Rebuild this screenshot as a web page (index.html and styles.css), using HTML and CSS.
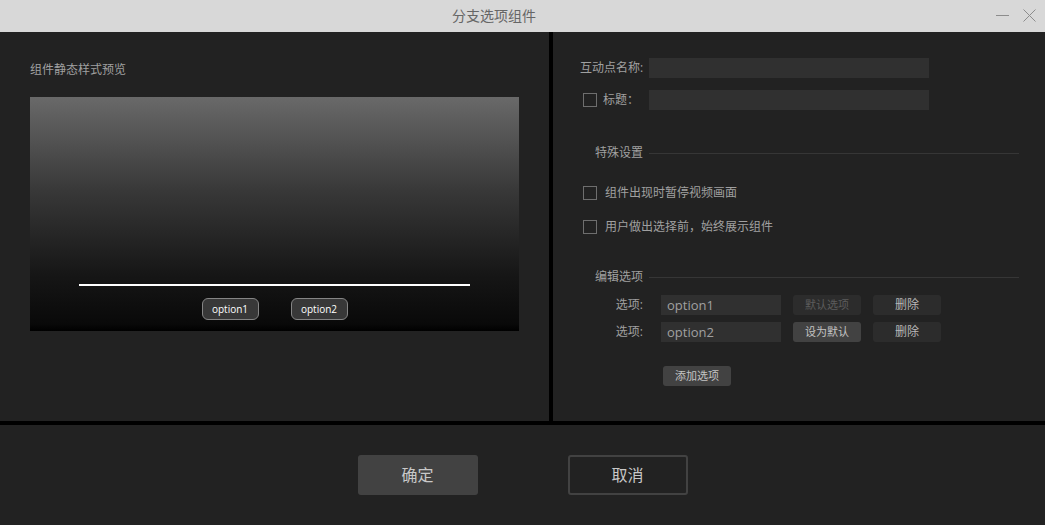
FILE: index.html
```html
<!DOCTYPE html>
<html lang="zh-CN">
<head>
<meta charset="utf-8">
<title>分支选项组件</title>
<link rel="stylesheet" href="styles.css">
</head>
<body>
<div class="dialog">
  <header class="titlebar">
    <h1 class="title">分支选项组件</h1>
    <div class="window-actions">
      <button class="window-button" type="button" aria-label="最小化">
        <svg width="14" height="14" viewBox="0 0 14 14"><path d="M0 6.5H13"/></svg>
      </button>
      <button class="window-button" type="button" aria-label="关闭">
        <svg width="14" height="14" viewBox="0 0 14 14"><path d="M.5 .5L12.5 12.5M12.5 .5L.5 12.5"/></svg>
      </button>
    </div>
  </header>

  <main class="panels">
    <section class="panel preview-panel">
      <h2 class="preview-title">组件静态样式预览</h2>
      <div class="preview">
        <div class="progress-line"></div>
        <div class="preview-options">
          <button class="preview-option" type="button">option1</button>
          <button class="preview-option" type="button">option2</button>
        </div>
      </div>
    </section>

    <form class="panel settings" id="settings">
      <div class="fields">
        <div class="field">
          <label class="field-label" for="name">互动点名称:</label>
          <input class="text-input" id="name" type="text">
        </div>
        <div class="field">
          <div class="field-check">
            <input class="checkbox" id="use-title" type="checkbox">
            <label for="use-title">标题：</label>
          </div>
          <input class="text-input" id="title" type="text" aria-label="标题">
        </div>
      </div>

      <h2 class="section-title special-title">特殊设置</h2>
      <div class="checks">
        <div class="check-row">
          <input class="checkbox" id="pause" type="checkbox">
          <label for="pause">组件出现时暂停视频画面</label>
        </div>
        <div class="check-row">
          <input class="checkbox" id="always" type="checkbox">
          <label for="always">用户做出选择前，始终展示组件</label>
        </div>
      </div>

      <h2 class="section-title edit-title">编辑选项</h2>
      <div class="options">
        <div class="option-row">
          <label class="field-label" for="option1">选项:</label>
          <input class="text-input option-input" id="option1" type="text" value="option1">
          <button class="small-button muted" type="button" disabled>默认选项</button>
          <button class="small-button delete" type="button">删除</button>
        </div>
        <div class="option-row">
          <label class="field-label" for="option2">选项:</label>
          <input class="text-input option-input" id="option2" type="text" value="option2">
          <button class="small-button" type="button">设为默认</button>
          <button class="small-button delete" type="button">删除</button>
        </div>
      </div>
      <button class="small-button add" type="button">添加选项</button>
    </form>
  </main>

  <footer class="footer">
    <button class="action primary" type="submit" form="settings">确定</button>
    <button class="action secondary" type="button">取消</button>
  </footer>
</div>
</body>
</html>
```

FILE: styles.css
```css
* {
  box-sizing: border-box;
}

body {
  margin: 0;
  background: #000;
  color: #a0a0a0;
  font: 12px/20px "Open Sans", "Noto Sans CJK SC", sans-serif;
}

button,
input {
  margin: 0;
  padding: 0;
  border: 0;
  color: inherit;
  font: inherit;
}

h1,
h2 {
  margin: 0;
  font-size: 12px;
  font-weight: 400;
}

.dialog {
  display: flex;
  flex-direction: column;
  min-height: 100vh;
}

.titlebar {
  display: grid;
  grid-template-columns: 1fr auto 1fr;
  align-items: center;
  height: 32px;
  padding-right: 8px;
  background: #d8d8d8;
  color: #666;
}

.title {
  grid-column: 2;
  padding-right: 49px;
  font-size: 14px;
}

.window-actions {
  display: flex;
  justify-content: flex-end;
  gap: 13px;
}

.window-button {
  display: flex;
  width: 14px;
  height: 14px;
  background: none;
}

.window-button path {
  fill: none;
  stroke: #8c8c8c;
}

.panels {
  display: grid;
  flex: 1;
  grid-template-columns: 549fr 492fr;
  gap: 4px;
}

.panel {
  background: #222;
}

.preview-panel {
  padding: 28px 30px;
}

.preview-title {
  margin-bottom: 17px;
}

.preview {
  display: flex;
  flex-direction: column;
  justify-content: flex-end;
  gap: 12px;
  height: 234px;
  padding-bottom: 11px;
  background: linear-gradient(#696969, #383838 40%, #161616 76%, #090909 97%, #000);
}

.progress-line {
  width: 80%;
  height: 2px;
  margin: 0 auto;
  background: #fff;
}

.preview-options {
  display: flex;
  justify-content: center;
  gap: 32px;
}

.preview-option {
  width: 57px;
  height: 22px;
  border: 1px solid #858585;
  border-radius: 6px;
  background: #383838;
  color: #fff;
  font-size: 10px;
}

.settings {
  padding: 26px 26px 26px 27px;
}

.fields {
  display: grid;
  gap: 12px;
}

.field {
  display: grid;
  grid-template-columns: 63px minmax(0, 280px);
  gap: 6px;
}

.field-label {
  text-align: right;
  white-space: nowrap;
}

.field-check,
.check-row {
  display: flex;
  align-items: center;
  padding-left: 3px;
  white-space: nowrap;
}

.field-check {
  gap: 6px;
}

.check-row {
  gap: 8px;
}

.checkbox {
  flex: none;
  width: 14px;
  height: 14px;
  border: 1px solid #6e6e6e;
  appearance: none;
}

.checkbox:checked {
  background: #6e6e6e;
}

.text-input {
  min-width: 0;
  height: 20px;
  padding: 0 6px;
  background: #303030;
}

.section-title {
  display: flex;
  align-items: center;
  gap: 6px;
  padding-left: 15px;
}

.section-title::after {
  flex: 1;
  height: 1px;
  background: #363636;
  content: "";
}

.special-title {
  margin: 33px 0 20px;
}

.checks {
  display: grid;
  gap: 14px;
}

.edit-title {
  margin: 30px 0 8px;
}

.options {
  display: grid;
  gap: 7px;
}

.option-row {
  display: grid;
  grid-template-columns: 69px 120px 68px 68px;
  column-gap: 12px;
}

.option-row .field-label {
  padding-right: 6px;
}

.option-input {
  font-size: 13px;
}

.small-button {
  width: 68px;
  height: 20px;
  border-radius: 3px;
  background: #424242;
  color: #c4c4c4;
  font-size: 11px;
}

.muted {
  background: #2c2c2c;
  color: #5c5c5c;
}

.delete {
  background: #2c2c2c;
  color: #b8b8b8;
  font-size: 12px;
}

.add {
  display: block;
  margin: 24px 0 0 83px;
}

.footer {
  display: flex;
  align-items: center;
  justify-content: center;
  gap: 90px;
  height: 100px;
  margin-top: 4px;
  background: #222;
}

.action {
  width: 120px;
  height: 40px;
  border-radius: 3px;
  color: #c8c8c8;
  font-size: 16px;
}

.primary {
  background: #424242;
}

.secondary {
  border: 2px solid #424242;
  background: transparent;
}
```
